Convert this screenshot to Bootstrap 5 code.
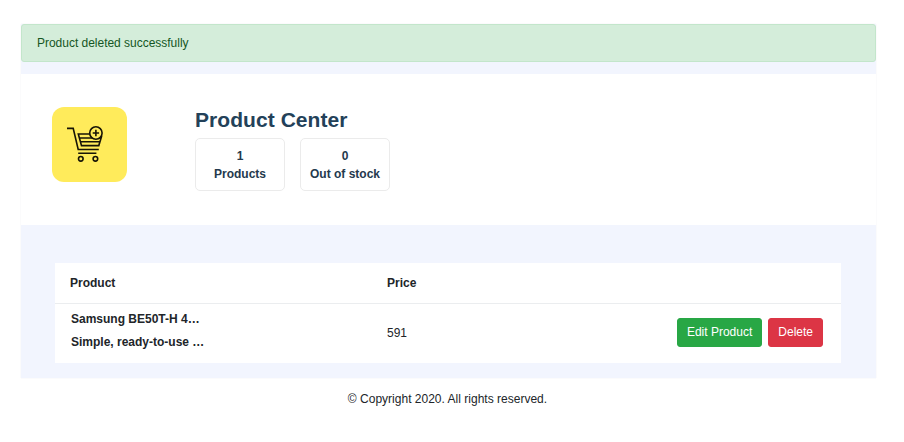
<!DOCTYPE html>
<html lang="en">
<head>
<meta charset="utf-8">
<meta name="viewport" content="width=device-width, initial-scale=1">
<title>Product Center</title>
<link href="https://cdn.jsdelivr.net/npm/bootstrap@5.3.0/dist/css/bootstrap.min.css" rel="stylesheet">
<style>
body{font-family:"Liberation Sans",Arial,sans-serif;font-size:12px;line-height:18px;color:#212529;background:#fff;overflow:hidden}
.panel{width:855px;height:354px;margin:24px 0 0 21px;background:#f2f5fe;box-shadow:0 0 1px #e4e6ea}
.notice{height:38px;padding:9px 15px;color:#155724;background:#d4edda;border-color:#c3e6cb;border-radius:3px;margin-bottom:12px;letter-spacing:-.02px}
.hero{height:151px;padding:33px 31px 0}
.logo{width:75px;height:75px;border-radius:12px;background:#ffeb5b;margin-right:68px}
.hero h1{font-size:21px;line-height:25px;font-weight:700;color:#234159;margin:0 0 6px;letter-spacing:.06px}
.stats{gap:15px}
.stat{width:90px;height:53px;border:1px solid #ebebeb;border-radius:5px;color:#24394d;padding-top:8px}
.products{width:786px;margin:38px 0 0 34px;background:#fff}
.products th{height:40px;padding:0 15px;border-bottom:1px solid #ebedef}
.products td{height:60px;padding:0 15px}
.products .info{line-height:23px;padding:0 16px 5px;font-weight:700}
.actions{gap:6px;padding:0 3px 2px 0}
.act{height:29px;padding:4px 9px;font-size:12px;line-height:19px;border-radius:3px;color:#fff}
.act-edit,.act-edit:hover{background:#28a745;border-color:#28a745;color:#fff}
.act-del,.act-del:hover{background:#dc3545;border-color:#dc3545;color:#fff}
footer{width:855px;margin:12px 0 0 20px;letter-spacing:.01px}
</style>
<script src="https://cdn.jsdelivr.net/npm/bootstrap@5.3.0/dist/js/bootstrap.bundle.min.js"></script>
</head>
<body>
<main class="panel">
  <div class="alert notice" role="alert">Product deleted successfully</div>
  <section class="hero bg-white d-flex align-items-start">
    <div class="logo">
      <svg class="d-block" width="75" height="75" viewBox="0 0 75 75" fill="none" stroke="#171406" stroke-width="1.6">
        <path d="M15 21.400h6.200L26.200 42.500H46.800M26.200 46.200h18.200M38 27H26.300l3.200 11.600H46.800L49.700 29M27.200 31H49.500M28.400 34.800H48"/>
        <circle cx="43.900" cy="26" r="6.200" fill="#ffeb5b"/>
        <path d="M43.900 22.800v6.400M40.700 26h6.400"/>
        <circle cx="28.800" cy="51.800" r="2.300"/><circle cx="43.400" cy="51.800" r="2.300"/>
      </svg>
    </div>
    <div>
      <h1>Product Center</h1>
      <div class="stats d-flex text-center fw-bold">
        <div class="stat"><div>1</div><div>Products</div></div>
        <div class="stat"><div>0</div><div>Out of stock</div></div>
      </div>
    </div>
  </section>
  <table class="products">
    <colgroup><col style="width:317px"><col style="width:200px"><col></colgroup>
    <thead><tr><th>Product</th><th>Price</th><th></th></tr></thead>
    <tbody><tr>
      <td class="info"><div>Samsung BE50T-H 4…</div><div>Simple, ready-to-use …</div></td>
      <td>591</td>
      <td><div class="actions d-flex justify-content-end"><button class="btn act act-edit" type="button">Edit Product</button><button class="btn act act-del" type="button">Delete</button></div></td>
    </tr></tbody>
  </table>
</main>
<footer class="text-center">© Copyright 2020. All rights reserved.</footer>
</body>
</html>
